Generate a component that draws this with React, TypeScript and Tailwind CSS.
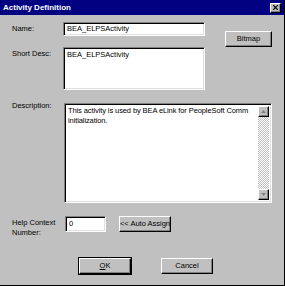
import React from 'react';

const sunken =
  "bg-white border border-t-[#808080] border-l-[#808080] border-b-white border-r-white shadow-[inset_1px_1px_0_#000,inset_-1px_-1px_0_#dfdfdf]";
const raised =
  "bg-[#c0c0c0] border border-t-white border-l-white border-b-black border-r-black shadow-[inset_-1px_-1px_0_#808080]";

const Btn = ({ children, w, def }: { children: React.ReactNode; w: string; def?: boolean }) => (
  <div className={`${w} h-[16px] ${def ? 'outline outline-1 outline-black' : ''}`}>
    <div className={`${raised} w-full h-full flex items-center justify-center text-black whitespace-nowrap`}>{children}</div>
  </div>
);

const ScrollArrow = ({ up }: { up?: boolean }) => (
  <div className={`${raised} w-[11px] h-[11px] flex items-center justify-center`}>
    <svg width="5" height="3" viewBox="0 0 5 3">
      {up ? <path d="M2.5 0 L5 3 L0 3 Z" fill="#808080" /> : <path d="M0 0 L5 0 L2.5 3 Z" fill="#808080" />}
    </svg>
  </div>
);

export default function App() {
  return (
    <div
      className="w-[285px] h-[286px] bg-[#c0c0c0] border-r border-b border-r-black border-b-black flex flex-col text-[7.5px] leading-[10px] text-black"
      style={{ fontFamily: '"Liberation Sans", Arial, sans-serif' }}
    >
      {/* title bar */}
      <div className="h-[15px] bg-[#000080] flex items-center justify-between pl-[3px] pr-[3px] shrink-0">
        <span className="text-white font-bold text-[8px]">Activity Definition</span>
        <div className={`${raised} w-[11px] h-[10px] flex items-center justify-center`}>
          <svg width="5" height="5" viewBox="0 0 5 5">
            <path d="M0 0 L5 5 M5 0 L0 5" stroke="#000" strokeWidth="1.2" />
          </svg>
        </div>
      </div>

      <div className="flex flex-col pl-[12px] whitespace-nowrap">
        {/* name + short desc + bitmap */}
        <div className="flex mt-[7px]">
          <div className="flex flex-col">
            <div className="flex items-center">
              <span className="w-[51px]">Name:</span>
              <div className={`${sunken} w-[142px] h-[14px] flex items-center px-[3px]`}>BEA_ELPSActivity</div>
            </div>
            <div className="flex mt-[11px]">
              <span className="w-[51px] mt-[2px]">Short Desc:</span>
              <div className={`${sunken} w-[142px] h-[43px] px-[3px] pt-[2px]`}>BEA_ELPSActivity</div>
            </div>
          </div>
          <div className="ml-[20px] mt-[9px]">
            <Btn w="w-[47px]">Bitmap</Btn>
          </div>
        </div>

        {/* description */}
        <div className="flex mt-[13px]">
          <span className="w-[52px] mt-[-2px]">Description:</span>
          <div className={`${sunken} w-[208px] h-[100px] flex p-[2px]`}>
            <div className="flex-1 pl-[1px] overflow-hidden tracking-[-0.1px]">
              <div>This activity is used by BEA eLink for PeopleSoft Comm</div>
              <div>initialization.</div>
            </div>
            <div className="w-[11px] flex flex-col bg-[repeating-conic-gradient(#c0c0c0_0_25%,#fff_0_50%)] bg-[length:2px_2px]">
              <ScrollArrow up />
              <div className="flex-1" />
              <ScrollArrow />
            </div>
          </div>
        </div>

        {/* help context */}
        <div className="flex items-start mt-[13px]">
          <span className="w-[53px] mt-[2px]">
            Help Context
            <br />
            Number:
          </span>
          <div className={`${sunken} w-[41px] h-[16px] flex items-center px-[3px]`}>0</div>
          <div className="ml-[13px]">
            <Btn w="w-[52px]">&lt;&lt; Auto Assign</Btn>
          </div>
        </div>

        {/* ok / cancel */}
        <div className="flex mt-[20px] pl-[67px] gap-[30px]">
          <Btn w="w-[52px]" def>
            <span className="underline">O</span>K
          </Btn>
          <Btn w="w-[52px]">Cancel</Btn>
        </div>
      </div>
    </div>
  );
}
